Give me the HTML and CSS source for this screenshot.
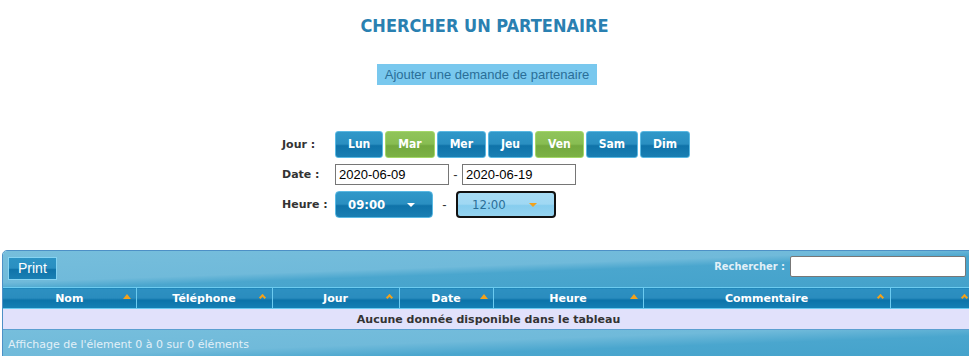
FILE: index.html
```html
<!DOCTYPE html>
<html>
<head>
    <meta charset="UTF-8">
    <title>Chercher un partenaire</title>
    <link rel="stylesheet" href="styles.css">
</head>
<body>
    <h1 class="title">CHERCHER UN PARTENAIRE</h1>

    <div class="add-wrap">
        <span class="add-btn">Ajouter une demande de partenaire</span>
    </div>

    <div class="search-form">
        <div class="form-row">
            <label class="form-label">Jour :</label>
            <div class="days">
                <span class="day">Lun</span>
                <span class="day active">Mar</span>
                <span class="day">Mer</span>
                <span class="day">Jeu</span>
                <span class="day active">Ven</span>
                <span class="day">Sam</span>
                <span class="day">Dim</span>
            </div>
        </div>
        <div class="form-row">
            <label class="form-label">Date :</label>
            <input type="text" class="date-input" value="2020-06-09">
            <span class="dash">-</span>
            <input type="text" class="date-input" value="2020-06-19">
        </div>
        <div class="form-row">
            <label class="form-label">Heure :</label>
            <div class="time-select">
                <span>09:00</span>
                <span class="caret"></span>
            </div>
            <span class="dash dash-time">-</span>
            <div class="time-select focused">
                <span>12:00</span>
                <span class="caret"></span>
            </div>
        </div>
    </div>

    <div class="grid-wrapper">
        <div class="grid-toolbar">
            <span class="print-btn">Print</span>
            <div class="grid-search">
                <label>Rechercher :</label>
                <input type="text">
            </div>
        </div>
        <table class="grid">
            <colgroup>
                <col style="width: 133px">
                <col style="width: 136px">
                <col style="width: 127px">
                <col style="width: 94px">
                <col style="width: 150px">
                <col style="width: 247px">
                <col>
            </colgroup>
            <thead>
                <tr>
                    <th>Nom<span class="sort up"></span></th>
                    <th>Téléphone<span class="sort both"></span></th>
                    <th>Jour<span class="sort both"></span></th>
                    <th>Date<span class="sort up"></span></th>
                    <th>Heure<span class="sort up"></span></th>
                    <th>Commentaire<span class="sort both"></span></th>
                    <th><span class="sort both"></span></th>
                </tr>
            </thead>
            <tbody>
                <tr>
                    <td colspan="7" class="empty">Aucune donnée disponible dans le tableau</td>
                </tr>
            </tbody>
        </table>
        <div class="grid-footer">Affichage de l'élement 0 à 0 sur 0 éléments</div>
    </div>
</body>
</html>
```

FILE: styles.css
```css
body {
    margin: 0;
    font-family: "DejaVu Sans", Verdana, sans-serif;
    background: #fff;
    overflow: hidden;
}

.title {
    margin: 0;
    padding-top: 15px;
    font-family: "DejaVu Sans Condensed", "DejaVu Sans", sans-serif;
    font-size: 18px;
    line-height: 22px;
    font-weight: bold;
    color: #2a80b1;
    text-align: center;
}

.add-wrap {
    margin-top: 27px;
    text-align: center;
    padding-left: 5px;
}

.add-btn {
    display: inline-block;
    background: #79c8ee;
    color: #2a6e98;
    font-family: "Liberation Sans", Arial, sans-serif;
    font-size: 13px;
    line-height: 21px;
    padding: 0 8px;
}

.search-form {
    width: 410px;
    margin: 46px auto 0;
    padding-left: 5px;
    display: flex;
    flex-direction: column;
    gap: 6px;
}

.form-row {
    display: flex;
    align-items: center;
}

.form-row > * {
    flex-shrink: 0;
}

.form-label {
    width: 53px;
    font-size: 11px;
    font-weight: bold;
    color: #333;
}

.days {
    display: flex;
    gap: 2px;
}

.day {
    display: inline-block;
    height: 25px;
    line-height: 25px;
    padding: 0 12px;
    border: 1px solid #5ab9e3;
    border-radius: 3px;
    background: linear-gradient(#3098c9 0%, #2a8fc1 48%, #0f73a9 55%, #1a7fb3 100%);
    color: #fff;
    font-family: "DejaVu Sans Condensed", "DejaVu Sans", sans-serif;
    font-weight: bold;
    font-size: 12px;
}

.day.active {
    border-color: #a4d868;
    background: linear-gradient(#90c45a 0%, #88bd52 48%, #73a83e 55%, #7cb245 100%);
}

.date-input {
    width: 114px;
    height: 21px;
    box-sizing: border-box;
    border: 1px solid #767676;
    padding: 1px 3px;
    margin: 0;
    font-family: "Liberation Sans", Arial, sans-serif;
    font-size: 13px;
    color: #000;
}

.dash {
    width: 13px;
    text-align: center;
    font-family: "Liberation Sans", Arial, sans-serif;
    font-size: 13px;
    color: #333;
}

.dash-time {
    width: 23px;
}

.time-select {
    width: 98px;
    height: 27px;
    box-sizing: border-box;
    display: flex;
    align-items: center;
    justify-content: space-between;
    padding: 0 17px 0 12px;
    border: 1px solid #5ab9e3;
    border-radius: 4px;
    background: linear-gradient(#3098c9 0%, #2a8fc1 48%, #0f73a9 55%, #1a7fb3 100%);
    color: #fff;
    font-family: "DejaVu Sans Condensed", "DejaVu Sans", sans-serif;
    font-weight: bold;
    font-size: 13px;
}

.time-select .caret {
    width: 0;
    height: 0;
    border-left: 4px solid transparent;
    border-right: 4px solid transparent;
    border-top: 4px solid #fff;
}

.time-select.focused {
    width: 100px;
    border: 2px solid #111;
    background: linear-gradient(#a6dbf4 0%, #a0d8f3 48%, #86cdee 55%, #95d3f0 100%);
    color: #2a6e98;
    font-weight: normal;
    padding-left: 14px;
}

.time-select.focused .caret {
    border-top-color: #f2a21b;
}

.grid-wrapper {
    margin: 32px 0 0 2px;
    width: 971px;
    border: 1px solid #4d90c6;
    border-radius: 5px 5px 0 0;
    overflow: hidden;
    font-size: 11px;
}

.grid-toolbar {
    height: 36px;
    display: flex;
    align-items: flex-start;
    justify-content: space-between;
    padding: 0 8px 0 5px;
    background: linear-gradient(178deg, #76bedc 0%, #70bada 45%, #4aa6ce 56%, #44a2cb 100%);
}

.print-btn {
    margin-top: 6px;
    height: 21px;
    line-height: 21px;
    padding: 0 9px;
    border: 1px solid #85d3f2;
    background: linear-gradient(#2c93c4 0%, #2a8fc1 48%, #0f73a9 55%, #1a80b4 100%);
    color: #fff;
    font-family: "Liberation Sans", Arial, sans-serif;
    font-size: 14px;
}

.grid-search {
    margin-top: 5px;
    display: flex;
    align-items: center;
    gap: 5px;
}

.grid-search label {
    font-family: "DejaVu Sans Condensed", "DejaVu Sans", sans-serif;
    font-weight: bold;
    color: #e2f0f8;
}

.grid-search input {
    width: 176px;
    height: 21px;
    box-sizing: border-box;
    margin: 0;
    border: 1px solid #777;
    border-radius: 2px;
}

.grid {
    width: 100%;
    table-layout: fixed;
    border-collapse: collapse;
}

.grid th {
    position: relative;
    height: 20px;
    padding: 0;
    border: 1px solid #6ccbf0;
    background: linear-gradient(#2d90c1 0%, #2a8cbe 48%, #0c73a9 58%, #1580b5 100%);
    color: #fff;
    font-weight: bold;
    text-align: center;
}

.grid th:first-child {
    border-left: none;
}

.grid th:last-child {
    border-right: none;
}

.sort {
    position: absolute;
    right: 5px;
    top: 6px;
    width: 8px;
    height: 5px;
}

.sort.up {
    width: 0;
    height: 0;
    border-left: 4px solid transparent;
    border-right: 4px solid transparent;
    border-bottom: 5px solid #f2a21b;
}

.sort.both::before {
    content: "";
    position: absolute;
    left: 1px;
    top: 1px;
    width: 5px;
    height: 5px;
    border-left: 2px solid #f2a21b;
    border-top: 2px solid #f2a21b;
    transform: rotate(45deg);
    box-sizing: border-box;
}

.grid td.empty {
    height: 20px;
    padding: 0;
    background: #e1e1fb;
    color: #333;
    font-weight: bold;
    text-align: center;
    border-bottom: 1px solid #5b9fd0;
}

.grid-footer {
    height: 27px;
    line-height: 29px;
    padding-left: 5px;
    color: #e2f0f8;
    background: linear-gradient(178deg, #76bedc 0%, #70bada 45%, #4aa6ce 65%, #44a2cb 100%);
}
```
